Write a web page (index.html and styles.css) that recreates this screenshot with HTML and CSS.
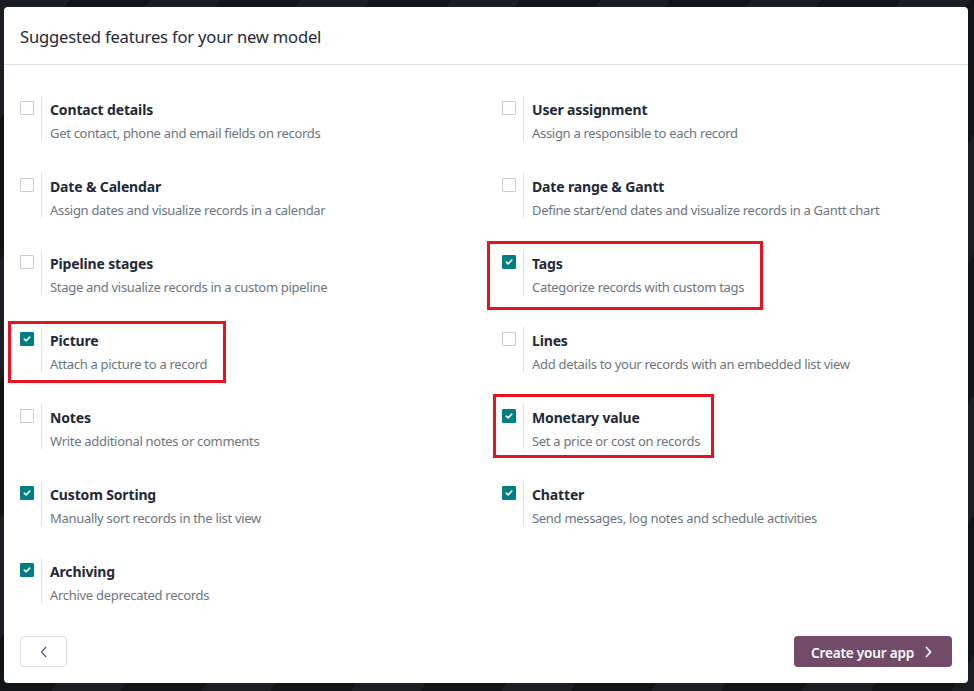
FILE: index.html
```html
<!DOCTYPE html>
<html>
<head>
<meta charset="utf-8">
<link rel="stylesheet" href="styles.css">
</head>
<body>
<div class="modal">
  <div class="modal-header">
    <h4 class="title">Suggested features for your new model</h4>
  </div>
  <div class="modal-body">
    <div class="features">
      <div class="feature">
        <span class="check"></span>
        <div class="text"><div class="label">Contact details</div><div class="desc">Get contact, phone and email fields on records</div></div>
      </div>
      <div class="feature">
        <span class="check"></span>
        <div class="text"><div class="label">User assignment</div><div class="desc">Assign a responsible to each record</div></div>
      </div>
      <div class="feature">
        <span class="check"></span>
        <div class="text"><div class="label">Date &amp; Calendar</div><div class="desc">Assign dates and visualize records in a calendar</div></div>
      </div>
      <div class="feature">
        <span class="check"></span>
        <div class="text"><div class="label">Date range &amp; Gantt</div><div class="desc">Define start/end dates and visualize records in a Gantt chart</div></div>
      </div>
      <div class="feature">
        <span class="check"></span>
        <div class="text"><div class="label">Pipeline stages</div><div class="desc">Stage and visualize records in a custom pipeline</div></div>
      </div>
      <div class="feature">
        <span class="check on"><svg viewBox="0 0 14 14"><path d="M3.8 7.2 L6 9.2 L10.2 4.8" /></svg></span>
        <div class="text"><div class="label">Tags</div><div class="desc">Categorize records with custom tags</div></div>
        <span class="mark mark-tags"></span>
      </div>
      <div class="feature">
        <span class="check on"><svg viewBox="0 0 14 14"><path d="M3.8 7.2 L6 9.2 L10.2 4.8" /></svg></span>
        <div class="text"><div class="label">Picture</div><div class="desc">Attach a picture to a record</div></div>
        <span class="mark mark-picture"></span>
      </div>
      <div class="feature">
        <span class="check"></span>
        <div class="text"><div class="label">Lines</div><div class="desc">Add details to your records with an embedded list view</div></div>
      </div>
      <div class="feature">
        <span class="check"></span>
        <div class="text"><div class="label">Notes</div><div class="desc">Write additional notes or comments</div></div>
      </div>
      <div class="feature">
        <span class="check on"><svg viewBox="0 0 14 14"><path d="M3.8 7.2 L6 9.2 L10.2 4.8" /></svg></span>
        <div class="text"><div class="label">Monetary value</div><div class="desc">Set a price or cost on records</div></div>
        <span class="mark mark-money"></span>
      </div>
      <div class="feature">
        <span class="check on"><svg viewBox="0 0 14 14"><path d="M3.8 7.2 L6 9.2 L10.2 4.8" /></svg></span>
        <div class="text"><div class="label">Custom Sorting</div><div class="desc">Manually sort records in the list view</div></div>
      </div>
      <div class="feature">
        <span class="check on"><svg viewBox="0 0 14 14"><path d="M3.8 7.2 L6 9.2 L10.2 4.8" /></svg></span>
        <div class="text"><div class="label">Chatter</div><div class="desc">Send messages, log notes and schedule activities</div></div>
      </div>
      <div class="feature">
        <span class="check on"><svg viewBox="0 0 14 14"><path d="M3.8 7.2 L6 9.2 L10.2 4.8" /></svg></span>
        <div class="text"><div class="label">Archiving</div><div class="desc">Archive deprecated records</div></div>
      </div>
    </div>
  </div>
  <div class="modal-footer">
    <button class="btn-back"><svg viewBox="0 0 12 16"><path d="M8 3 L3.5 8 L8 13" /></svg></button>
    <button class="btn-create">Create your app <svg viewBox="0 0 12 16"><path d="M4 3 L8.5 8 L4 13" /></svg></button>
  </div>
</div>
</body>
</html>
```
FILE: styles.css
```css
html, body {
  margin: 0;
  padding: 0;
}
body {
  width: 974px;
  height: 691px;
  overflow: hidden;
  background-color: #16191d;
  background-image: repeating-linear-gradient(120deg, #1b1f24 0 60px, #121518 60px 130px);
  font-family: "Noto Sans", "Open Sans", sans-serif;
  padding: 7px 6px 8px 4px;
  box-sizing: border-box;
}
.modal {
  background: #fff;
  border-radius: 4px;
  height: 676px;
  display: flex;
  flex-direction: column;
}
.modal-header {
  height: 58px;
  border-bottom: 1px solid #dee2e6;
  padding: 2px 16px 0 16px;
  display: flex;
  align-items: center;
  box-sizing: border-box;
}
.title {
  margin: 0;
  font-size: 16.6px;
  font-weight: 400;
  color: #1f2937;
  letter-spacing: -0.2px;
}
.modal-body {
  flex: 1;
  padding: 31px 16px 0 16px;
}
.features {
  display: grid;
  grid-template-columns: 482px 1fr;
  row-gap: 32px;
}
.feature {
  position: relative;
  display: flex;
  align-items: flex-start;
}
.check {
  width: 14px;
  height: 14px;
  box-sizing: border-box;
  border: 1px solid #c9cdd2;
  border-radius: 1px;
  margin-top: 5px;
  margin-right: 7px;
  display: flex;
  align-items: center;
  justify-content: center;
  background: #fff;
}
.check.on {
  background: #017e84;
  border-color: #017e84;
}
.check svg {
  width: 14px;
  height: 14px;
}
.check svg path {
  fill: none;
  stroke: #fff;
  stroke-width: 1.8;
  stroke-linecap: round;
  stroke-linejoin: round;
}
.text {
  border-left: 1px solid #dee2e6;
  padding-left: 8px;
  padding-top: 3px;
  height: 45px;
  box-sizing: border-box;
}
.label {
  font-size: 14px;
  font-weight: 700;
  color: #1f2937;
  line-height: 22px;
  letter-spacing: -0.15px;
}
.desc {
  margin-top: 3px;
  font-size: 13px;
  color: #6c7580;
  line-height: 19px;
  letter-spacing: -0.3px;
}
.mark {
  position: absolute;
  border: 3px solid #e8131f;
  box-sizing: border-box;
  pointer-events: none;
}
.mark-picture {
  left: -12px;
  top: -6px;
  width: 218px;
  height: 62px;
}
.mark-tags {
  left: -15px;
  top: -9px;
  width: 276px;
  height: 69px;
}
.mark-money {
  left: -9px;
  top: -10px;
  width: 221px;
  height: 64px;
}
.modal-footer {
  display: flex;
  justify-content: space-between;
  align-items: flex-end;
  padding: 0 16px 16px 16px;
}
.btn-back {
  width: 47px;
  height: 31px;
  border: 1px solid #dee2e6;
  border-radius: 4px;
  background: #fff;
  display: flex;
  align-items: center;
  justify-content: center;
  padding: 0;
}
.btn-back svg {
  width: 12px;
  height: 16px;
}
.btn-back svg path {
  fill: none;
  stroke: #4a5a78;
  stroke-width: 1.2;
}
.btn-create {
  width: 158px;
  height: 31px;
  border: none;
  border-radius: 4px;
  background: #714b67;
  color: #fff;
  font-family: "Noto Sans", "Open Sans", sans-serif;
  font-size: 13.6px;
  font-weight: 600;
  display: flex;
  align-items: center;
  justify-content: flex-start;
  padding: 1px 0 0 17px;
  gap: 8px;
  letter-spacing: -0.2px;
}
.btn-create svg {
  width: 12px;
  height: 16px;
}
.btn-create svg path {
  fill: none;
  stroke: #fff;
  stroke-width: 1.6;
}
```
